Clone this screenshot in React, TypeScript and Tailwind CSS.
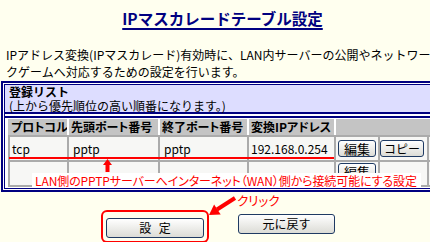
import React from 'react';

type BtnProps = { label: string; className?: string };

// old-style router button with a pale gradient
const Btn: React.FC<BtnProps> = ({ label, className = '' }) => (
  <button
    className={`rounded-[3px] border border-[#1f3a63] bg-linear-to-b from-white to-[#dcdcd6] text-black leading-none ${className}`}
  >
    {label}
  </button>
);

const App: React.FC = () => {
  return (
    <div className="w-[430px] h-[242px] overflow-hidden bg-[#ffffef] font-['Noto_Sans_CJK_JP',sans-serif] text-black">
      <div className="relative w-[445px] pt-[8px]">
        {/* Title */}
        <h1 className="text-center text-[15.5px] font-bold leading-[20px] text-[#000080] underline decoration-[1.5px] underline-offset-[3px]">
          IPマスカレードテーブル設定
        </h1>

        {/* Description */}
        <p className="mt-[18px] pl-[6px] text-[12px] leading-[17px] whitespace-nowrap">
          IPアドレス変換(IPマスカレード)有効時に、LAN内サーバーの公開やネットワー
          <br />
          クゲームへ対応するための設定を行います。
        </p>

        {/* Registered list panel */}
        <div className="mt-[1px] ml-[1px] border-2 border-[#000080] bg-white p-[1px]">
          <div className="border border-[#000080]">
            <div className="h-[27px] bg-[#ddddff] pl-[4px] text-[12px] leading-[13.5px] whitespace-nowrap">
              <div className="font-bold">登録リスト</div>
              <div>(上から優先順位の高い順番になります。)</div>
            </div>
            <div className="border-t-2 border-[#000080] h-[4px]" />
            <div className="border-t-2 border-[#000080] pl-[3px] pt-[1px] pb-[1px]">
              {/* header */}
              <div className="flex h-[16px] text-[12px] font-bold leading-[16px] whitespace-nowrap [font-feature-settings:'palt']">
                <div className="w-[59px] bg-[#c4c4c4] pl-[3px]">プロトコル</div>
                <div className="w-[91px] border-l-2 border-white bg-[#c4c4c4] pl-[2px]">先頭ポート番号</div>
                <div className="w-[89px] border-l-2 border-white bg-[#c4c4c4] pl-[2px]">終了ポート番号</div>
                <div className="w-[87px] border-l-2 border-white bg-[#c4c4c4] pl-[2px]">変換IPアドレス</div>
                <div className="flex-1 border-l-2 border-white bg-[#c4c4c4]" />
              </div>

              {/* row 1 */}
              <div className="flex h-[25px] border-t-2 border-[#ababab] bg-[#f7f7f5] text-[12px]">
                <div className="w-[59px] border-l-2 border-[#ababab] pl-[2px] flex items-center">tcp</div>
                <div className="w-[91px] border-l-2 border-[#ababab] pl-[4px] flex items-center">pptp</div>
                <div className="w-[89px] border-l-2 border-[#ababab] pl-[4px] flex items-center">pptp</div>
                <div className="w-[87px] border-l-2 border-[#ababab] pl-[2px] flex items-center">192.168.0.254</div>
                <div className="w-[44px] border-l-2 border-[#ababab] pl-[2px] flex items-center">
                  <Btn label="編集" className="w-[38px] h-[17px] text-[13px]" />
                </div>
                <div className="w-[49px] border-l-2 border-[#ababab] flex items-center">
                  <Btn label="コピー" className="w-[44px] h-[17px] text-[12px]" />
                </div>
                <div className="flex-1 border-l-2 border-[#ababab]" />
              </div>

              {/* row 2 */}
              <div className="flex h-[27px] border-y-2 border-[#ababab] bg-[#f7f7f5] text-[12px]">
                <div className="w-[59px] border-l-2 border-[#ababab]" />
                <div className="w-[91px] border-l-2 border-[#ababab]" />
                <div className="w-[89px] border-l-2 border-[#ababab]" />
                <div className="w-[87px] border-l-2 border-[#ababab]" />
                <div className="w-[44px] border-l-2 border-[#ababab] pl-[2px] pt-[1px]">
                  <Btn label="編集" className="w-[38px] h-[17px] text-[13px]" />
                </div>
                <div className="w-[49px] border-l-2 border-[#ababab]" />
                <div className="flex-1 border-l-2 border-[#ababab]" />
              </div>
            </div>
          </div>
        </div>

        {/* Bottom buttons */}
        <div className="mt-[22px] flex gap-[34px] pl-[106px]">
          <div className="relative">
            <div className="absolute -left-[5px] -right-[5px] -top-[4px] -bottom-[5px] rounded-[6px] border-2 border-[#ff0000]" />
            <Btn label="設 定" className="relative w-[98px] h-[20px] text-[12px] [word-spacing:5px]" />
          </div>
          <Btn label="元に戻す" className="w-[97px] h-[20px] text-[12px]" />
        </div>

        {/* annotations */}
        <div className="absolute left-[9px] top-[157px] h-[2px] w-[325px] bg-[#ff0000]" />
        <svg className="absolute left-[103px] top-[159px]" width="9" height="13" viewBox="0 0 9 13">
          <polygon points="4.5,0 9,6 0,6" fill="#ff0000" />
          <rect x="2.5" y="6" width="4" height="7" fill="#ff0000" />
        </svg>
        <div className="absolute left-[32px] top-[173px] h-[15px] w-[389px] bg-white pl-[3px] text-[12px] tracking-[-0.1px] leading-[15px] text-[#ff0000] whitespace-nowrap [font-feature-settings:'palt']">
          LAN側のPPTPサーバーへインターネット（WAN）側から接続可能にする設定
        </div>
        <svg className="absolute left-[205px] top-[195px]" width="35" height="25" viewBox="0 0 35 25">
          <line x1="30" y1="3" x2="12" y2="14.5" stroke="#ff0000" strokeWidth="4" />
          <polygon points="4,20 15.7,19.5 9.1,9.5" fill="#ff0000" />
        </svg>
        <div className="absolute left-[237px] top-[194px] text-[12.5px] leading-[14px] text-[#ff0000] [font-feature-settings:'palt']">
          クリック
        </div>
      </div>
    </div>
  );
};

export default App;
